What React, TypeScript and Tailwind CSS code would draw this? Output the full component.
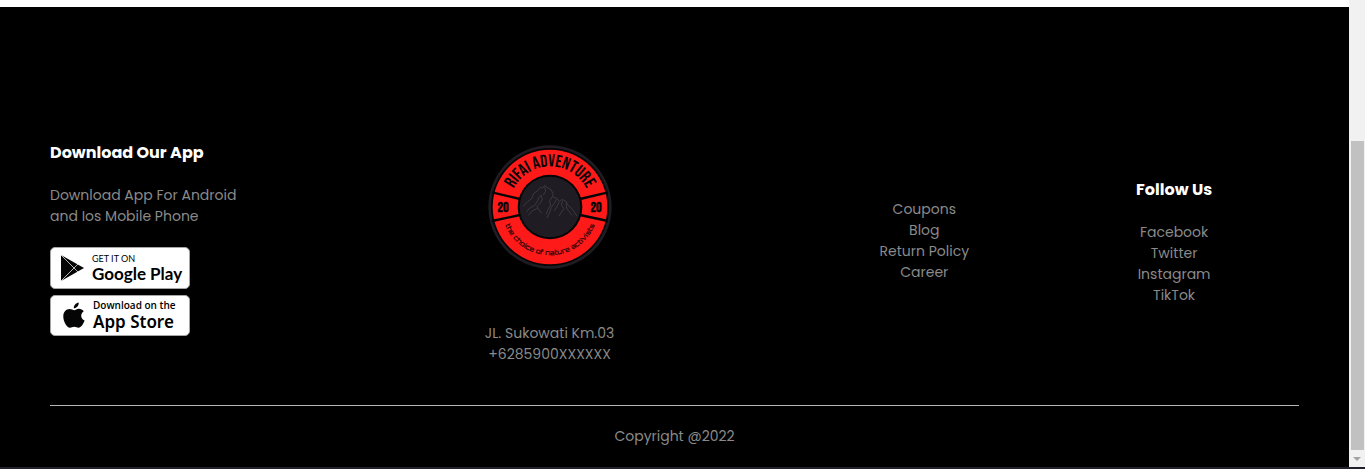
import React from "react";

const storeLinks = ["Coupons", "Blog", "Return Policy", "Career"];
const socialLinks = ["Facebook", "Twitter", "Instagram", "TikTok"];

function LinkList({ items }: { items: string[] }) {
  return (
    <ul>
      {items.map((item) => (
        <li key={item}>
          <a href="#">{item}</a>
        </li>
      ))}
    </ul>
  );
}

function Logo() {
  return (
    <svg viewBox="24 21 372 372" className="mx-auto size-31" role="img" aria-label="Rifai Adventure">
      <defs>
        <path id="arc-top" d="M 88 207 A 122 122 0 0 1 332 207" />
        <path id="arc-bottom" d="M 65 207 A 145 145 0 0 0 355 207" />
      </defs>
      <circle cx="210" cy="207" r="185" fill="#1f1d23" />
      <circle cx="210" cy="207" r="177" fill="#050505" />
      <circle cx="210" cy="207" r="172" fill="#ff1a1a" />
      <path
        d="M36 163 L120 183 M36 249 L120 231 M384 163 L300 183 M384 249 L300 231"
        stroke="#050505"
        strokeWidth="7"
      />
      <circle cx="210" cy="207" r="97" fill="#050505" />
      <circle cx="210" cy="207" r="91" fill="#1f1d23" />
      <g fill="none" stroke="#48484d" strokeWidth="2" strokeLinejoin="round">
        <path d="M129 205 L144 190 L156 181 L160 168 L174 157 L181 148 L188 150 L194 142 L204 150 L213 155 L219 166 L218 177 L229 180 L238 190 L247 184 L258 190 L264 202 L276 212 L291 235" />
        <path d="M139 221 L151 209 L163 203 L172 190 L177 178 L184 171 M145 232 L158 218 L171 211 M183 171 L187 184 L181 195 L171 205 L177 216 L185 226 M194 146 L197 160 L190 171" />
        <path d="M216 177 L208 190 L212 201 L204 214 L199 229 M230 184 L222 197 L214 208 L209 224 L201 240 M237 192 L230 207 L222 219 M248 188 L244 201 L252 212 L243 224 L237 234 M258 194 L260 211 L269 223 L276 232" />
      </g>
      <text
        fill="#090507"
        fontFamily="'Bebas Neue', Oswald, Roboto, sans-serif"
        fontSize="52"
        fontWeight="400"
        textAnchor="middle"
      >
        <textPath href="#arc-top" startOffset="50%">
          RIFAI ADVENTURE
        </textPath>
      </text>
      <text
        fill="#300508"
        fontFamily="Orbitron, Roboto, sans-serif"
        fontSize="21"
        fontWeight="700"
        textAnchor="middle"
      >
        <textPath href="#arc-bottom" startOffset="50%">
          the choice of nature activists
        </textPath>
      </text>
      <g
        fill="#090507"
        fontFamily="'Bebas Neue', Oswald, Roboto, sans-serif"
        fontSize="42"
        fontWeight="700"
        textAnchor="middle"
      >
        <text x="69" y="221">20</text>
        <text x="348" y="221">20</text>
      </g>
    </svg>
  );
}

function GooglePlayBadge() {
  return (
    <a
      href="#"
      className="flex h-[42px] w-[140px] items-center gap-2 rounded-[5px] border border-[#a6a6a6] bg-white pl-[9px] text-black"
    >
      <svg viewBox="0 0 24 28" className="h-7 w-6 shrink-0" aria-hidden="true">
        <path d="M1 1 L24 14 L1 27 Z" fill="#050505" />
        <path d="M1 1 L18 18 M1 27 L18 10" stroke="#fff" strokeWidth="0.7" />
      </svg>
      <span className="flex flex-col font-['Lato',sans-serif]">
        <span className="text-[9px] leading-[10px]">GET IT ON</span>
        <span className="text-[17px] leading-[19px] font-bold whitespace-nowrap">Google Play</span>
      </span>
    </a>
  );
}

function AppStoreBadge() {
  return (
    <a
      href="#"
      className="flex h-[41px] w-[140px] items-center gap-2 rounded-[5px] border border-[#a6a6a6] bg-white pl-3 text-black"
    >
      <svg viewBox="0 0 22 27" className="h-[27px] w-[22px] shrink-0" aria-hidden="true">
        <path
          d="M15.7 0.5 C16 3.5 13.6 6.3 10.8 6.3 C10.5 3.6 12.9 1 15.7 0.5 Z M15.8 6.8 C17.8 6.8 19.7 7.8 20.8 9.3 C17 11.6 17.6 17 21.6 18.6 C20.4 22 18 25.8 15.6 25.8 C13.9 25.8 13.2 24.8 11.3 24.8 C9.3 24.8 8.6 25.8 7 25.8 C3.8 25.8 0.3 19.7 0.3 14.6 C0.3 9.7 3.4 7 6.5 7 C8.5 7 10 8.2 11.3 8.2 C12.5 8.2 14 6.8 15.8 6.8 Z"
          fill="#050505"
        />
      </svg>
      <span className="flex flex-col pb-0.5">
        <span className="font-['Open_Sans',sans-serif] text-[10px] leading-[13px] font-semibold whitespace-nowrap">
          Download on the
        </span>
        <span className="font-['Noto_Sans',sans-serif] text-[17px] leading-[19px] font-semibold whitespace-nowrap">
          App Store
        </span>
      </span>
    </a>
  );
}

function ScrollRail() {
  return (
    <div className="flex w-4 shrink-0 flex-col items-center bg-[#f1f1f1]" aria-hidden="true">
      <div className="grow-141 basis-0" />
      <div className="w-[13px] grow-309 basis-0 bg-[#c1c1c1]" />
      <div className="flex h-[17px] items-center">
        <svg viewBox="0 0 8 4" className="h-1 w-2">
          <path d="M0 0 H8 L4 4 Z" fill="#a3a3a3" />
        </svg>
      </div>
    </div>
  );
}

export default function App() {
  return (
    <div className="flex min-h-screen flex-col bg-white font-['Poppins','Inter',sans-serif] text-[14px] leading-[21px] text-[#8a8a8a]">
      <div className="flex grow">
        <div className="flex min-w-0 grow flex-col pt-[7px]">
          <footer className="grow bg-black px-[50px] pt-[134px] pb-5">
            <div className="grid grid-cols-10 items-start">
              <section className="col-span-3">
                <h3 className="text-[16px] leading-6 font-bold text-white">Download Our App</h3>
                <p className="mt-5">
                  Download App For Android
                  <br />
                  and Ios Mobile Phone
                </p>
                <div className="mt-5 flex flex-col gap-1.5">
                  <GooglePlayBadge />
                  <AppStoreBadge />
                </div>
              </section>
              <section className="col-span-2 pt-1 text-center">
                <Logo />
                <p className="mt-[54px]">
                  JL. Sukowati Km.03
                  <br />
                  +6285900XXXXXX
                </p>
              </section>
              <nav className="col-span-2 col-start-7 pt-[58px] text-center" aria-label="Store">
                <LinkList items={storeLinks} />
              </nav>
              <nav className="col-span-2 pt-[37px] text-center" aria-label="Social">
                <h3 className="mb-5 text-[16px] leading-6 font-bold text-white">Follow Us</h3>
                <LinkList items={socialLinks} />
              </nav>
            </div>
            <hr className="mt-10 mb-5 border-t border-[#b5b5b5]" />
            <p className="text-center">Copyright @2022</p>
          </footer>
        </div>
        <ScrollRail />
      </div>
      <div className="h-0.5 bg-[#242029]" />
    </div>
  );
}
